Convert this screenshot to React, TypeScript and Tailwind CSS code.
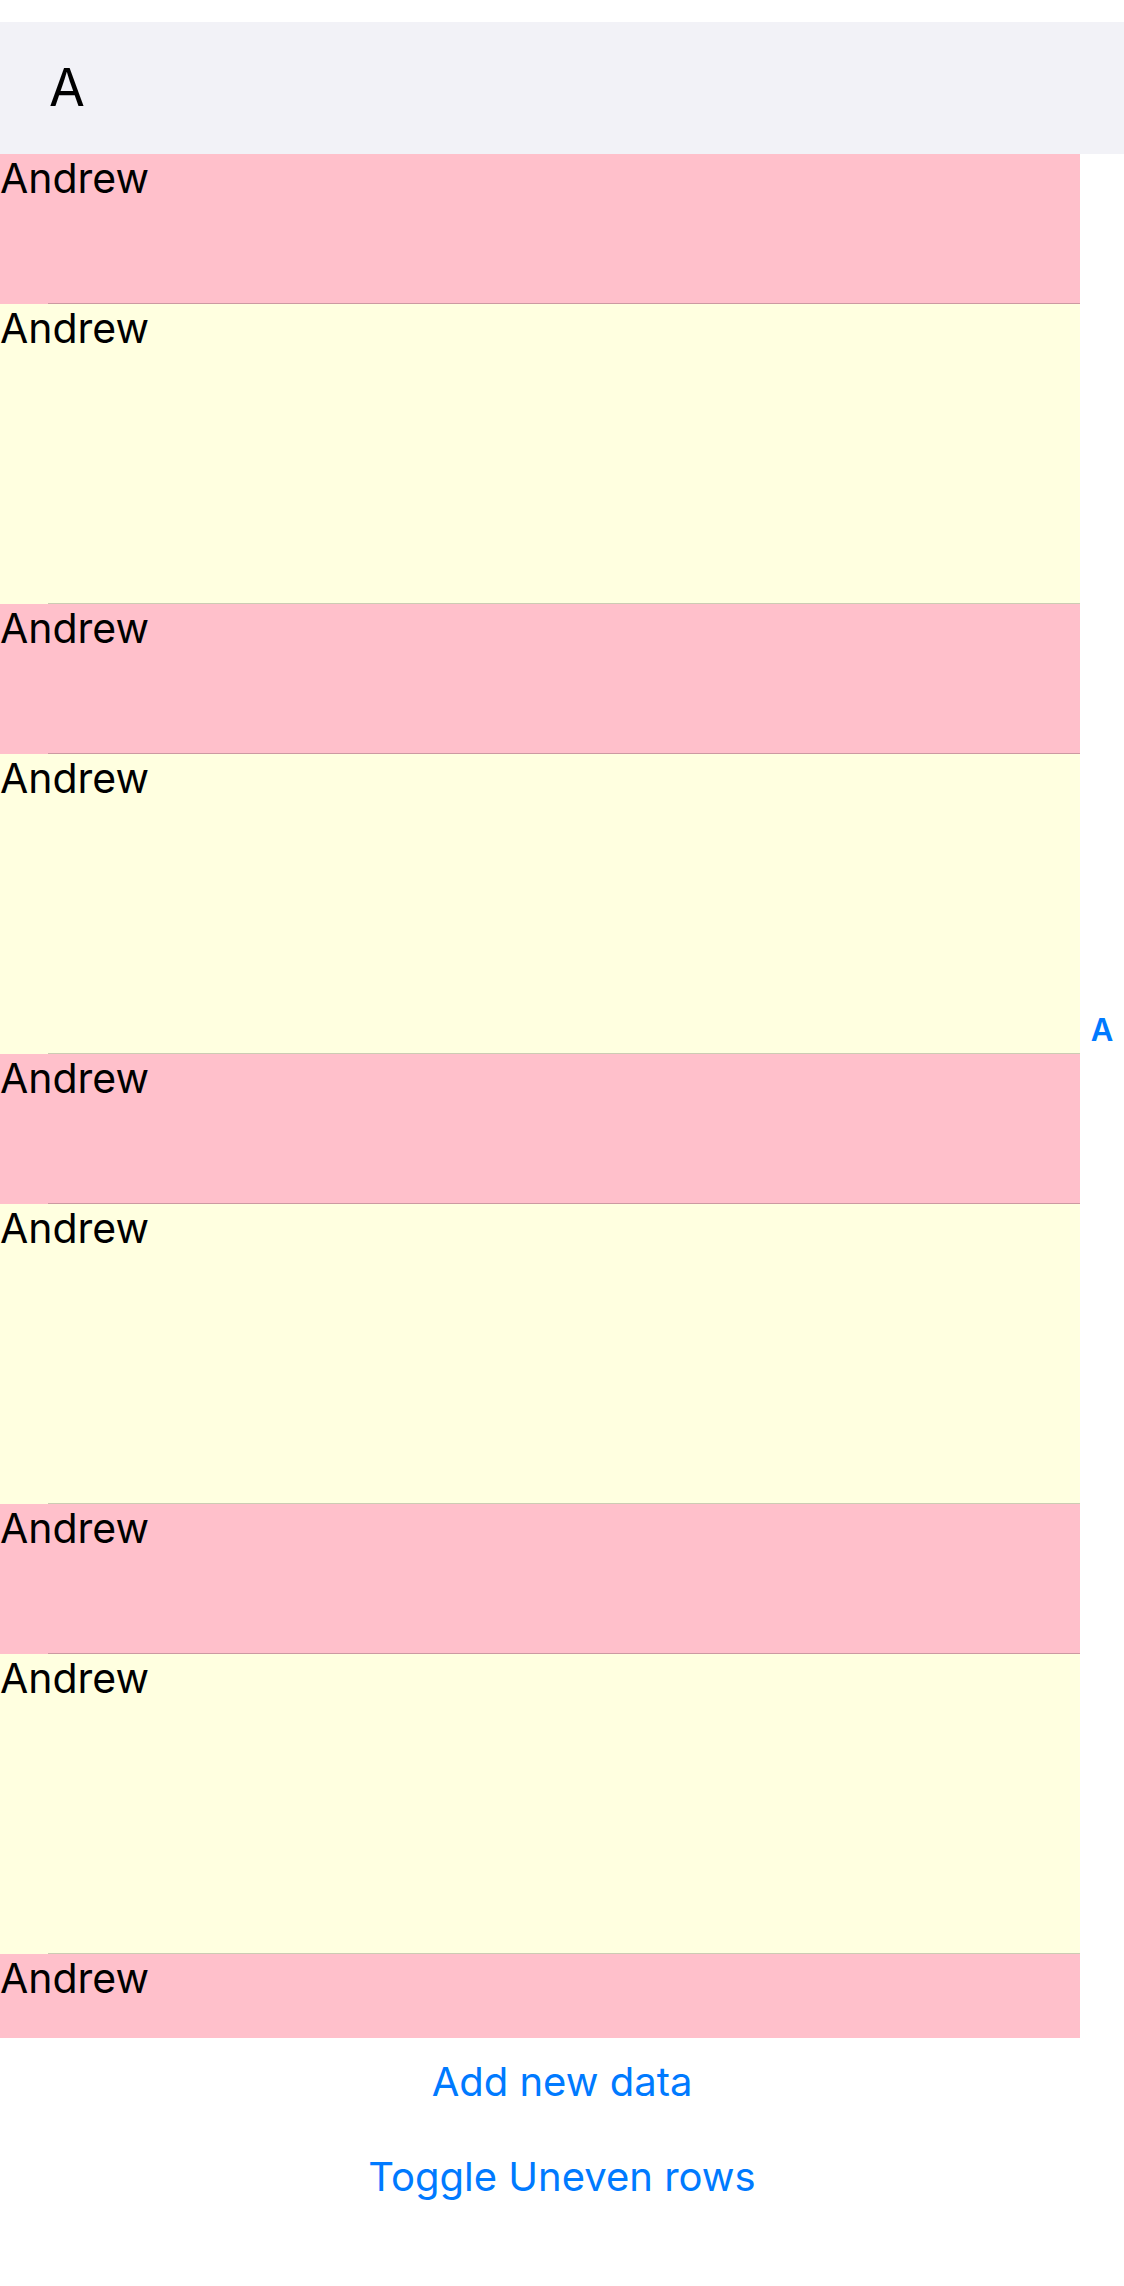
const ROWS = Array.from({ length: 9 }, (_, i) => ({ id: i, name: "Andrew", tall: i % 2 === 1 }));

function Row({ name, tall }: { name: string; tall: boolean }) {
  return (
    <div className={`relative shrink-0 ${tall ? "h-[300px] bg-[#ffffe0]" : "h-[150px] bg-[#ffc0cb]"}`}>
      <span className="block text-[41px] leading-[49px] text-black">{name}</span>
      <div className="absolute bottom-0 left-[48px] right-0 h-px bg-black/20" />
    </div>
  );
}

export default function App() {
  return (
    <div className="flex h-[2286px] w-[1124px] flex-col bg-white font-['Inter','Noto_Sans',sans-serif]">
      <div className="h-[22px] shrink-0" />
      <div className="relative flex h-[2016px] shrink-0 flex-col overflow-hidden">
        <div className="flex h-[132px] shrink-0 items-center bg-[#f2f2f7] pl-[49px]">
          <span className="text-[52px] leading-[60px] text-black">A</span>
        </div>
        <div className="flex w-[1080px] flex-col overflow-hidden">
          {ROWS.map((row) => (
            <Row key={row.id} name={row.name} tall={row.tall} />
          ))}
        </div>
        <div className="absolute right-0 top-0 flex h-full w-[44px] items-center justify-center">
          <span className="text-[31px] font-semibold leading-[36px] text-[#007aff]">A</span>
        </div>
      </div>
      <div className="flex flex-col items-center gap-[47px] pt-[20px]">
        <button type="button" className="text-[40px] leading-[48px] text-[#007aff]">
          Add new data
        </button>
        <button type="button" className="text-[40px] leading-[48px] text-[#007aff]">
          Toggle Uneven rows
        </button>
      </div>
    </div>
  );
}
